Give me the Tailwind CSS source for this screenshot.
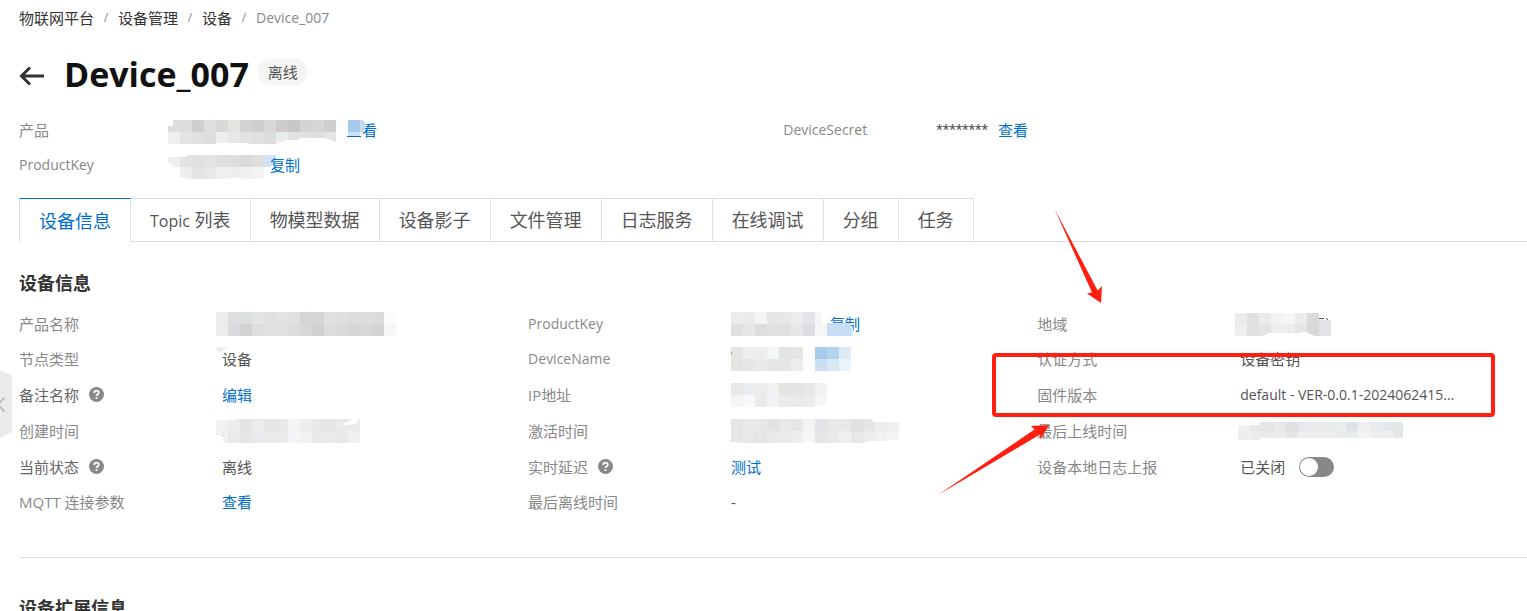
<!DOCTYPE html>
<html lang="zh-CN">
    <head>
        <meta charset="UTF-8" />
        <meta name="viewport" content="width=device-width, initial-scale=1.0" />
        <title>Device_007 - 物联网平台</title>
        <script src="https://cdn.jsdelivr.net/npm/@tailwindcss/browser@4"></script>
    </head>
    <body class="relative h-screen overflow-hidden bg-white font-['Open_Sans','Noto_Sans_CJK_SC',sans-serif] text-[15px] leading-5 text-[#555]">
        <!-- sidebar handle -->
        <button type="button" aria-label="展开" class="absolute left-0 top-[370px]">
            <svg class="block" width="12" height="68" viewBox="0 0 12 68" fill="none">
                <path d="M0 0 12 5V62L0 68Z" fill="#ebebeb" />
                <path d="M4.5 27.500-2 34.500 4.500 41.500" stroke="#bbb" stroke-width="2" />
            </svg>
        </button>

        <main class="pl-[19px]">
            <nav class="flex h-9 items-center text-[#333]">
                <a href="#">物联网平台</a>
                <span class="w-6 text-center text-xs text-[#888]">/</span>
                <a href="#">设备管理</a>
                <span class="w-6 text-center text-xs text-[#888]">/</span>
                <a href="#">设备</a>
                <span class="w-6 text-center text-xs text-[#888]">/</span>
                <span class="text-sm text-[#888]">Device_007</span>
            </nav>

            <header class="flex h-[76px] items-center">
                <a href="#" aria-label="返回" class="mt-1">
                    <svg width="26" height="20" viewBox="0 0 26 20" fill="none" stroke="#333" stroke-width="3">
                        <path d="M25 10H2.500M11 1.500 2.500 10 11 18.500" />
                    </svg>
                </a>
                <h1 class="ml-[19px] text-[34px] leading-10 font-bold text-[#111]">Device_007</h1>
                <span class="ml-[9px] mb-1 rounded-full bg-[#f4f4f4] px-[10px] py-[3px] text-[#555]">离线</span>
            </header>

            <dl class="grid grid-cols-[149px_40.8%_153px_1fr] auto-rows-[35px] items-center">
                <dt class="text-[#888]">产品</dt>
                <dd class="relative pl-[179px]">
                    <a href="#" class="text-[#0070cc]">查看</a>
                    <svg class="absolute left-0 top-0" width="204" height="24" data-cells="dddddd dcdcde cfcfd0 dcdee2 d8d8d6 e3e3e0 d3d2d2 cfcdce d8d8d6 cecdcb c9c7c6 d4d4d6 d5d5d8 cececf fcfcfd a6caec|efefef e3e3e1 e1e1e1 dddddd ecefee e6e8e8 e2e2e2 e0e0df dddddf e8ecea e2e2e0 e1e1df dededf e3e3e3 fdfdfd cfe1f5">
                        <path d="M192 0h3l4 5-4 7h-3Z" fill="#c4dcf2" />
                        <path d="M0 0h5v6H0ZM48 24V23h33v1ZM108 24l10-4h12l2-2h24l12 4v2ZM180 16h12v8h-12Z" fill="#fff" />
                        <path d="M179 16.500h14" stroke="#0070cc" />
                    </svg>
                </dd>
                <dt class="text-sm text-[#888]">DeviceSecret</dt>
                <dd class="flex gap-[10px]"><span class="font-['Roboto',sans-serif]">********</span><a href="#" class="text-[#0070cc]">查看</a></dd>
                <dt class="text-sm text-[#888]">ProductKey</dt>
                <dd class="relative pl-[102px]">
                    <svg class="absolute left-0 top-0" width="108" height="24" data-cells="eeeeee e3e3e3 e0e0e1 e3e3e3 dfdfe0 dddddd dadada dfdfe0 d3e3f5|ffffff eeeeef e4e4e5 e9e9ea eeefef eeeeee f0f0f0 f3f3f3">
                        <path d="M0 0h20l-3 2H0ZM0 7l8 7v5H0ZM12 24v-2h5v2ZM58 24v-1h15l2 1ZM96 24l5-7 1-5 6-5v17Z" fill="#fff" />
                    </svg>
                    <a href="#" class="relative text-[#0070cc]">复制</a>
                </dd>
            </dl>

            <div role="tablist" class="mt-4 flex h-11 border-b border-[#dedede] text-lg">
                <button type="button" role="tab" aria-selected="true" class="-mb-px border-x border-t border-x-[#dedede] border-t-[#0070cc] bg-white px-[19px] text-[#0070cc]">设备信息</button>
                <button type="button" role="tab" class="border-r border-t border-[#dedede] px-[19px]"><span class="text-base">Topic</span> 列表</button>
                <button type="button" role="tab" class="border-r border-t border-[#dedede] px-[19px]">物模型数据</button>
                <button type="button" role="tab" class="border-r border-t border-[#dedede] px-[19px]">设备影子</button>
                <button type="button" role="tab" class="border-r border-t border-[#dedede] px-[19px]">文件管理</button>
                <button type="button" role="tab" class="border-r border-t border-[#dedede] px-[19px]">日志服务</button>
                <button type="button" role="tab" class="border-r border-t border-[#dedede] px-[19px]">在线调试</button>
                <button type="button" role="tab" class="border-r border-t border-[#dedede] px-[19px]">分组</button>
                <button type="button" role="tab" class="border-r border-t border-[#dedede] px-[19px]">任务</button>
            </div>

            <section class="relative border-b border-[#dedede] pt-[27px] pb-[37px]">
                <h2 class="h-[37px] text-lg leading-7 font-bold text-[#333]">设备信息</h2>
                <table class="w-full table-fixed text-left">
                    <colgroup>
                        <col class="w-[203px]" />
                        <col class="w-[20.3%]" />
                        <col class="w-[203px]" />
                        <col class="w-[20.3%]" />
                        <col class="w-[203px]" />
                        <col />
                    </colgroup>
                    <tbody>
                        <tr class="h-[35px]">
                            <th class="font-normal text-[#888]">产品名称</th>
                            <td>
                                <svg class="-ml-[6px] block" width="180" height="24" data-cells="ececea dfdde0 dbdfdf e4e4e5 dfe0e0 e1e4e3 e2e1df d3d5d8 d5d6d4 e1e1e1 dfdfe0 dcdcdb dcdedd dadcdc fafcfb|ececea dbdade d0d3d0 dedede e2e2e2 e0e1e1 dedcda d7d7da d0d1ce dcdcdb dbdbdb d5d6d4 d8d8d9 d3d4d4 f4f6f8"></svg>
                            </td>
                            <th class="text-sm font-normal text-[#888]">ProductKey</th>
                            <td>
                                <div class="relative pl-[99px]">
                                    <a href="#" class="text-[#0070cc]">复制</a>
                                    <svg class="absolute left-0 -top-[2px]" width="122" height="24" data-cells="ececec ebebeb f3f4f4 e6e6e6 e7e7e8 ebecec e3e5e8 f5f5f5|e0e0e0 e7e7e7 dddddf e2e1e0 e1e0df e7e7e7 dcdde1 f6f6f6 c8ddf3 c5dbf2">
                                        <path d="M90 0h6v12h-5V4Z" fill="#fff" />
                                        <path d="M96 11h24v13H96Z" fill="#c8ddf3" />
                                        <path d="M120 16h2v8h-2Z" fill="#d8e8f7" />
                                    </svg>
                                </div>
                            </td>
                            <th class="font-normal text-[#888]">地域</th>
                            <td>
                                <svg class="-ml-[5px] block" width="96" height="24">
                                    <g data-cells="ebebeb e0e0e0 e9ebed f1f3f3 f6f6f6 ebecec dbdad9|eeeeeb dfe0e3 e4e4e4 eceef1 ededef e5e5e7 d8d8d8 e1e3e6"></g>
                                    <path d="M0 0h84v1H0ZM28 24l6-3h30l3-1h5l3 2 5 2Z" fill="#fff" />
                                    <path d="M84 8h12v4H84Z" fill="#e1e3e6" />
                                    <path d="M84 6.500h5M91 6l2 2" stroke="#555" />
                                </svg>
                            </td>
                        </tr>
                        <tr class="h-[35px]">
                            <th class="font-normal text-[#888]">节点类型</th>
                            <td>
                                <div class="relative">
                                    设备
                                    <svg class="absolute -left-[6px] -top-[2px]" width="12" height="5"><path d="M0 0h12L9 2 5 5H2L0 3Z" fill="#eee" /></svg>
                                </div>
                            </td>
                            <th class="text-sm font-normal text-[#888]">DeviceName</th>
                            <td>
                                <svg class="block" width="120" height="24" data-cells="e4e4e3 eeeeee eeeeee f2f6f5 e4e4e2 e5e5e4 fdfdfd a8cbea b5d5ef deebf7|e4e4e3 e5e6e9 eaeaea e5e5e5 e6e6e6 ededee fdfdfd cbdff3 d9e9f3 eaf2fa">
                                    <path d="M0 5h1v2H0Z" fill="#d98a4e" />
                                </svg>
                            </td>
                            <th class="font-normal text-[#888]">认证方式</th>
                            <td>设备密钥</td>
                        </tr>
                        <tr class="h-[37px]">
                            <th class="font-normal text-[#888]">
                                <span class="flex items-center gap-[10px]">
                                    <span class="text-[#666]">备注名称</span>
                                    <svg width="15" height="15" viewBox="0 0 15 15" fill="none">
                                        <circle cx="7.500" cy="7.500" r="7.500" fill="#888" />
                                        <path d="M5.200 6C5.200 3 9.800 3 9.800 5.700 9.800 7.300 7.500 7.200 7.500 9M7.500 10.200V12" stroke="#fff" stroke-width="1.800" />
                                    </svg>
                                </span>
                            </th>
                            <td><a href="#" class="text-[#0070cc]">编辑</a></td>
                            <th class="font-normal text-[#888]">IP地址</th>
                            <td>
                                <svg class="block" width="96" height="24" data-cells="eae7e4 e9eef1 ececec f0f2f2 e5e3df e2e4e8 e8e7e5 f0f1f1|f4f4f4 f6f8fb ecebea f0f2f5 ecebea e9eaec ececec f5f7f6">
                                    <path d="M84 24h12v-2H89Z" fill="#fff" />
                                </svg>
                            </td>
                            <th class="font-normal text-[#888]">固件版本</th>
                            <td class="text-sm">default - VER-0.0.1-2024062415...</td>
                        </tr>
                        <tr class="h-9">
                            <th class="font-normal text-[#888]">创建时间</th>
                            <td>
                                <svg class="-ml-[6px] block" width="144" height="24" data-cells="f1f1f0 ebeced e5e4e2 ebeced e5e7e7 e9e8e7 f1f3f7 eeeded e6e9e8 e4e6e9 e9eaec e9eaeb|f1f1f0 e9eae9 e6e5e3 e8eaed e9eaea ecebea f2f4f8 f3f1ef e7eae9 e9eaec e6e9ea f0f0f0">
                                    <path d="M0 16h7v8H0ZM0 0h20v1H0ZM125 6l12-6h5v4l-10 2Z" fill="#fff" />
                                    <path d="M6 16h1v1H6Z" fill="#d98a4e" />
                                </svg>
                            </td>
                            <th class="font-normal text-[#888]">激活时间</th>
                            <td>
                                <svg class="block" width="168" height="24" data-cells="e6e6e6 e7e8e8 e8e8e8 e1e2e2 e8e8ea e7e6e4 f3f3f3 e2e4e8 e8e8e9 e9e8e8 e1e1e2 e5e5e4 ececee eff0f2|e6e6e6 e8e8e7 e4e7e5 e9e9ea e9eaec efeeea f7f7f7 e4e6ea e8e9e9 f0efed e5e7ea ececea eff1f3 f3f3f4">
                                    <path d="M140 0h28v3h-26ZM0 24v-1h7v1ZM132 24l9-2h16v-1h11v3Z" fill="#fff" />
                                </svg>
                            </td>
                            <th class="font-normal text-[#888]">最后上线时间</th>
                            <td>
                                <svg class="-ml-[2px] block" width="165" height="18" viewBox="0 3 165 18" data-cells="f0f0f0 e8e8ea e3e5e5 e9e9e8 dfe0e1 e8e9ea e9eae9 eaebeb ebecec dfe1e2 efefef e9eaeb e5e7e9 e3e7e6|eeeeee ebebeb e9e9e9 ececea e7e5e4 eeeff1 efeff0 ececec e9ebec e8ebeb f3f3f4 eeefef eff0ee e5e7e6">
                                    <path d="M0 0h165v3H0ZM0 3h22v3H0ZM22 19h143v5H22ZM0 21h22v3H0Z" fill="#fff" />
                                </svg>
                            </td>
                        </tr>
                        <tr class="h-[35px]">
                            <th class="font-normal text-[#888]">
                                <span class="flex items-center gap-[10px]">
                                    <span class="text-[#666]">当前状态</span>
                                    <svg width="15" height="15" viewBox="0 0 15 15" fill="none">
                                        <circle cx="7.500" cy="7.500" r="7.500" fill="#888" />
                                        <path d="M5.200 6C5.200 3 9.800 3 9.800 5.700 9.800 7.300 7.500 7.200 7.500 9M7.500 10.200V12" stroke="#fff" stroke-width="1.800" />
                                    </svg>
                                </span>
                            </th>
                            <td>离线</td>
                            <th class="font-normal text-[#888]">
                                <span class="flex items-center gap-[10px]">
                                    实时延迟
                                    <svg width="15" height="15" viewBox="0 0 15 15" fill="none">
                                        <circle cx="7.500" cy="7.500" r="7.500" fill="#888" />
                                        <path d="M5.200 6C5.200 3 9.800 3 9.800 5.700 9.800 7.300 7.500 7.200 7.500 9M7.500 10.200V12" stroke="#fff" stroke-width="1.800" />
                                    </svg>
                                </span>
                            </th>
                            <td><a href="#" class="text-[#0070cc]">测试</a></td>
                            <th class="font-normal text-[#888]"><label for="localLog">设备本地日志上报</label></th>
                            <td>
                                <div class="flex items-center gap-[14px]">
                                    已关闭
                                    <input
                                        type="checkbox"
                                        role="switch"
                                        id="localLog"
                                        class="h-5 w-[35px] appearance-none rounded-full bg-[#888] p-px before:block before:size-[18px] before:rounded-full before:bg-white before:content-['']"
                                    />
                                </div>
                            </td>
                        </tr>
                        <tr class="h-9">
                            <th class="font-normal text-[#888]">MQTT 连接参数</th>
                            <td><a href="#" class="text-[#0070cc]">查看</a></td>
                            <th class="font-normal text-[#888]">最后离线时间</th>
                            <td>-</td>
                            <th></th>
                            <td></td>
                        </tr>
                    </tbody>
                </table>
            </section>

            <h2 class="mt-9 text-lg leading-7 font-bold text-[#333]">设备扩展信息</h2>
        </main>

        <!-- red markers -->
        <div class="pointer-events-none absolute left-[992px] top-[353px] h-16 w-[503px] rounded-[4px] border-4 border-[#ff1f10]"></div>
        <svg class="pointer-events-none absolute left-[938px] top-[208px]" width="166" height="288" viewBox="938 208 166 288" fill="#ff1f10">
            <path d="M1054.300 208.500 1097.700 290.500 1102 286 1101 303 1087 293.500 1092 292.500Z" />
            <path d="M938 495 1034.500 429.500 1031 426 1049 425 1040.500 439.500 1040 434.500Z" />
        </svg>

        <script>
            // Masked values: each data-cells row becomes a line of 12px squares
            document.querySelectorAll("[data-cells]").forEach((el) => {
                const group = document.createElementNS("http://www.w3.org/2000/svg", "g");
                el.dataset.cells.split("|").forEach((row, y) => {
                    row.split(" ").forEach((color, x) => {
                        const rect = document.createElementNS("http://www.w3.org/2000/svg", "rect");
                        rect.setAttribute("x", x * 12);
                        rect.setAttribute("y", y * 12);
                        rect.setAttribute("width", 12);
                        rect.setAttribute("height", 12);
                        rect.setAttribute("fill", "#" + color);
                        group.appendChild(rect);
                    });
                });
                el.prepend(group);
            });
        </script>
    </body>
</html>
